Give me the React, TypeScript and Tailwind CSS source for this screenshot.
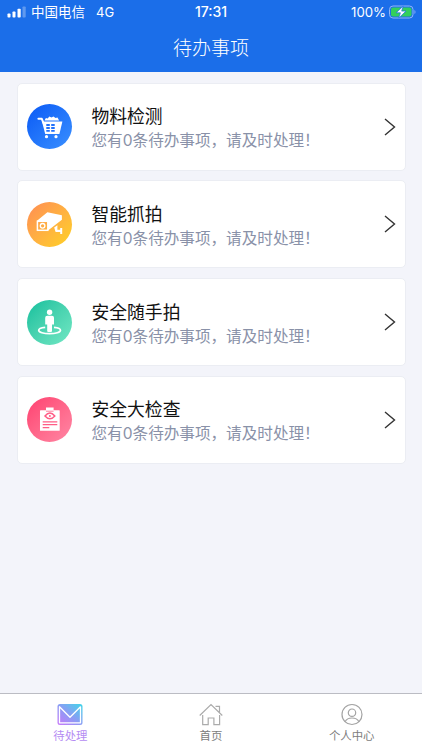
import type { ReactNode } from 'react';

interface TodoItem {
  id: string;
  title: string;
  count: number;
  iconClass: string;
  icon: ReactNode;
}

const CartIcon = () => (
  <svg viewBox="0 0 45 45" className="w-full h-full" fill="none">
    <path d="M11.4 14.8h3.4l1.6 4" stroke="white" strokeWidth="2" strokeLinecap="round" strokeLinejoin="round" />
    <path d="M15 17.4h20.4L32.4 29.9H18.2z" fill="white" />
    <path d="M17.5 16.5l1.4-2.5 1.8.4 1.6-1.8 2.2 1 2-1.2 2 1.6 2-.4 1.6 2.9z" fill="white" />
    <path d="M19.3 20h3.5v2h-3.5zM24.2 20h3.5v2h-3.5zM19.3 23h3.5v2h-3.5zM24.2 23h3.5v2h-3.5zM19.3 26h3.5v1.7h-3.5zM24.2 26h3.5v1.7h-3.5z" fill="#2070fb" />
    <circle cx="19.5" cy="32.7" r="1.6" fill="white" />
    <circle cx="29" cy="32.7" r="1.6" fill="white" />
  </svg>
);

const CameraIcon = () => (
  <svg viewBox="0 0 45 45" className="w-full h-full" fill="none">
    <path d="M9.7 19L20.4 10.3l14.5 3v4.5L21 28.5V19z" fill="white" />
    <rect x="10.4" y="19.3" width="10.4" height="9" stroke="white" strokeWidth="1.5" />
    <circle cx="15.6" cy="23.8" r="2.3" stroke="white" strokeWidth="1.3" />
    <path d="M27.2 25.5l3.2-2.3v4.6h2.8v-1.9h2v6h-2v-2h-4.6z" fill="white" />
  </svg>
);

const PersonIcon = () => (
  <svg viewBox="0 0 45 45" className="w-full h-full" fill="none">
    <circle cx="22.6" cy="12.2" r="2.7" fill="white" />
    <path d="M20.2 15.7h4.8a2 2 0 0 1 2 2v6.8h-2V31a1 1 0 0 1-1 1h-2.8a1 1 0 0 1-1-1v-6.5h-2v-6.800a2 2 0 0 1 2-2z" fill="white" />
    <path d="M18.2 27.3c-4 .4-6.5 1.5-6.5 2.9 0 2 4.9 3.5 10.9 3.5s10.9-1.5 10.9-3.5c0-1.4-2.5-2.5-6.5-2.9" stroke="white" strokeWidth="1.7" />
  </svg>
);

const InspectIcon = () => (
  <svg viewBox="0 0 45 45" className="w-full h-full" fill="none">
    <rect x="13" y="13.2" width="19.7" height="20.6" rx="0.6" fill="white" />
    <rect x="19" y="10.5" width="7.6" height="4" fill="white" />
    <path d="M19 14.2h7.6" stroke="#ff5c86" strokeWidth="0.8" />
    <path d="M18 18.9Q22.9 13.3 27.8 18.9Q22.9 24.5 18 18.9z" stroke="#ff5c86" strokeWidth="1.5" />
    <circle cx="22.9" cy="18.9" r="1" fill="#ff5c86" />
    <path d="M15.7 24.9h14.6M15.7 27.7h14.6M15.7 30.6h6.6" stroke="#ff5c86" strokeWidth="1.3" />
  </svg>
);

const items: TodoItem[] = [
  { id: 'material', title: '物料检测', count: 0, iconClass: 'from-[#0b58f5] to-[#3a8fff]', icon: <CartIcon /> },
  { id: 'capture', title: '智能抓拍', count: 0, iconClass: 'from-[#ff8c52] to-[#ffd21c]', icon: <CameraIcon /> },
  { id: 'snapshot', title: '安全随手拍', count: 0, iconClass: 'from-[#00bf9d] to-[#70e8c4]', icon: <PersonIcon /> },
  { id: 'inspection', title: '安全大检查', count: 0, iconClass: 'from-[#ff3d70] to-[#ff86a4]', icon: <InspectIcon /> },
];

const StatusBar = () => (
  <div className="flex items-center h-6 pl-[7px] pr-[6px] text-white text-[13.5px] leading-6">
    <div className="flex flex-1 items-center">
      <svg width="20" height="12" viewBox="0 0 20 12" fill="white">
        <rect x="0.5" y="7.5" width="3" height="4" rx="0.8" />
        <rect x="5.5" y="5.5" width="3" height="6" rx="0.8" />
        <rect x="10.5" y="2.8" width="3.2" height="8.7" rx="0.8" />
        <rect x="15.5" y="0.5" width="3.2" height="11" rx="0.8" opacity="0.3" />
      </svg>
      <span className="ml-1">中国电信</span>
      <span className="ml-[11px] text-[13px]">4G</span>
    </div>
    <span className="-ml-[1px] text-[14px] font-medium">17:31</span>
    <div className="flex flex-1 items-center justify-end">
      <span className="text-[13.2px]">100%</span>
      <svg className="ml-[3px]" width="27" height="14" viewBox="0 0 27 14" fill="none">
        <rect x="0.5" y="1" width="23.5" height="12" rx="3.5" stroke="#91b5f7" />
        <rect x="2" y="2.5" width="20.5" height="9" rx="2" fill="#33cf5d" />
        <path d="M25.5 5v4c1.3-.5 1.3-3.5 0-4z" fill="#91b5f7" />
        <path d="M14.2 1L7.2 7.8h4.2L9.8 13l7.2-6.9h-4.3z" fill="white" stroke="#1b6ee9" strokeWidth="0.7" />
      </svg>
    </div>
  </div>
);

const TodoCard = ({ item }: { item: TodoItem }) => (
  <div className="flex items-center h-[88px] pl-[9.5px] pr-[9px] rounded-[5px] bg-white border border-[#ebedf3]">
    <div className={`w-[45px] h-[45px] rounded-full bg-gradient-to-br ${item.iconClass}`}>{item.icon}</div>
    <div className="flex-1 ml-[19.5px] pt-[5px]">
      <h2 className="text-[17.8px] leading-6 font-normal text-[#111111]">{item.title}</h2>
      <p className="text-[15.6px] leading-6 text-[#8991a8]">
        您有{item.count}条待办事项，请及时处理！
      </p>
    </div>
    <svg width="12" height="18" viewBox="0 0 12 18" fill="none" stroke="#333333" strokeWidth="1.4">
      <path d="M1 1l9.5 8L1 17" />
    </svg>
  </div>
);

const TabBar = () => (
  <nav className="grid grid-cols-3 h-[57px] pt-[9px] bg-white border-t border-[#bbbcc3] text-[11.4px] leading-4 text-[#7c7c7c]">
    <div className="flex flex-col items-center text-[#b58cf3]">
      <svg width="26" height="23" viewBox="0 0 26 23" fill="none">
        <defs>
          <linearGradient id="mail" x1="0" y1="1" x2="1" y2="0">
            <stop offset="0" stopColor="#c979fa" />
            <stop offset="0.5" stopColor="#8a9df4" />
            <stop offset="1" stopColor="#40d7e9" />
          </linearGradient>
        </defs>
        <rect x="0.5" y="1" width="25" height="21" rx="2.5" fill="url(#mail)" />
        <path d="M2.5 3.8v16h21v-16L13 14.3z" stroke="white" strokeWidth="1.3" strokeLinejoin="round" />
      </svg>
      <span className="mt-[2px]">待处理</span>
    </div>
    <div className="flex flex-col items-center">
      <svg width="26" height="23" viewBox="0 0 26 23" fill="none" stroke="#ababab" strokeWidth="1.2">
        <path d="M1.7 12.5L13 1.5l11.3 11M4.7 12v9.7h5.5V15h5.7v6.7h5.7V12M17.5 3.3h4v6.5" />
      </svg>
      <span className="mt-[2px]">首页</span>
    </div>
    <div className="flex flex-col items-center">
      <svg width="24" height="23" viewBox="0 0 24 23" fill="none" stroke="#a3a3a3" strokeWidth="1.2">
        <circle cx="12" cy="11.5" r="10" />
        <circle cx="12" cy="9.7" r="3.7" />
        <path d="M5 18.7c1.4-2.6 4-3.7 7-3.7s5.6 1.1 7 3.7" />
      </svg>
      <span className="mt-[2px]">个人中心</span>
    </div>
  </nav>
);

export default function App() {
  return (
    <div className="flex flex-col h-[750px] w-[422px] bg-[#f3f4fa] font-[Inter,'Noto_Sans_CJK_SC',sans-serif]">
      <header className="h-[72px] bg-[#1b6ee9]">
        <StatusBar />
        <h1 className="pt-[2px] text-center text-[19px] leading-[46px] font-light text-white">待办事项</h1>
      </header>

      <main className="flex-1 flex flex-col gap-[9.8px] pt-[10.5px] pl-[16.5px] pr-4">
        {items.map((item) => (
          <TodoCard key={item.id} item={item} />
        ))}
      </main>

      <TabBar />
    </div>
  );
}
